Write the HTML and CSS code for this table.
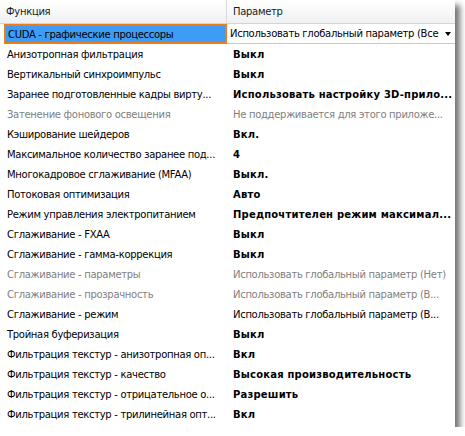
FILE: index.html
```html
<!DOCTYPE html>
<html lang="ru">
<head>
<meta charset="utf-8">
<title>Параметры</title>
<link rel="stylesheet" href="styles.css">
</head>
<body>
<div class="window">
  <div class="head">
    <div class="hcell hcell-left">Функция</div>
    <div class="hcell">Параметр</div>
  </div>
  <div class="rows">
    <div class="row selected">
      <div class="cell name">CUDA - графические процессоры</div>
      <div class="cell combo"><span class="combo-text">Использовать глобальный параметр (Все</span><span class="arrow"></span></div>
    </div>
    <div class="row"><div class="cell name">Анизотропная фильтрация</div><div class="cell val b">Выкл</div></div>
    <div class="row"><div class="cell name">Вертикальный синхроимпульс</div><div class="cell val b">Выкл</div></div>
    <div class="row"><div class="cell name">Заранее подготовленные кадры вирту...</div><div class="cell val b">Использовать настройку 3D-прило...</div></div>
    <div class="row dis"><div class="cell name">Затенение фонового освещения</div><div class="cell val">Не поддерживается для этого приложе...</div></div>
    <div class="row"><div class="cell name">Кэширование шейдеров</div><div class="cell val b">Вкл.</div></div>
    <div class="row"><div class="cell name">Максимальное количество заранее под...</div><div class="cell val b">4</div></div>
    <div class="row"><div class="cell name">Многокадровое сглаживание (MFAA)</div><div class="cell val b">Выкл.</div></div>
    <div class="row"><div class="cell name">Потоковая оптимизация</div><div class="cell val b">Авто</div></div>
    <div class="row"><div class="cell name">Режим управления электропитанием</div><div class="cell val b">Предпочтителен режим максимал...</div></div>
    <div class="row"><div class="cell name">Сглаживание - FXAA</div><div class="cell val b">Выкл</div></div>
    <div class="row"><div class="cell name">Сглаживание - гамма-коррекция</div><div class="cell val b">Выкл</div></div>
    <div class="row dis"><div class="cell name">Сглаживание - параметры</div><div class="cell val">Использовать глобальный параметр (Нет)</div></div>
    <div class="row dis"><div class="cell name">Сглаживание - прозрачность</div><div class="cell val">Использовать глобальный параметр (В...</div></div>
    <div class="row"><div class="cell name">Сглаживание - режим</div><div class="cell val">Использовать глобальный параметр (В...</div></div>
    <div class="row"><div class="cell name">Тройная буферизация</div><div class="cell val b">Выкл</div></div>
    <div class="row"><div class="cell name">Фильтрация текстур - анизотропная оп...</div><div class="cell val b">Вкл</div></div>
    <div class="row"><div class="cell name">Фильтрация текстур - качество</div><div class="cell val b">Высокая производительность</div></div>
    <div class="row"><div class="cell name">Фильтрация текстур - отрицательное о...</div><div class="cell val b">Разрешить</div></div>
    <div class="row"><div class="cell name">Фильтрация текстур - трилинейная опт...</div><div class="cell val b">Вкл</div></div>
  </div>
</div>
</body>
</html>
```

FILE: styles.css
```css
html, body {
  margin: 0;
  padding: 0;
  background: #ffffff;
}

body {
  font-family: "DejaVu Sans", Tahoma, sans-serif;
  font-size: 10px;
  letter-spacing: -0.3px;
  color: #000;
}

.window {
  width: 455px;
  height: 427px;
  background: #fff;
  box-shadow: 5px 5px 6px rgba(0, 0, 0, 0.55);
  overflow: hidden;
}

.head {
  display: grid;
  grid-template-columns: 227px 1fr;
  height: 23px;
  border-bottom: 1px solid #d5d5d5;
  background: linear-gradient(#ffffff, #f0f1f3);
}

.hcell {
  display: flex;
  align-items: center;
  padding-left: 6px;
  padding-bottom: 1px;
  color: #1a1a1a;
}

.hcell-left {
  border-right: 1px solid #d9d9d9;
}

.rows {
  display: flex;
  flex-direction: column;
}

.row {
  display: grid;
  grid-template-columns: 227px 1fr;
  height: 20px;
}

.cell {
  display: flex;
  align-items: center;
  white-space: nowrap;
  overflow: hidden;
}

.name {
  padding-left: 7px;
}

.val {
  padding-left: 6px;
  padding-right: 4px;
}

.b {
  font-weight: bold;
  letter-spacing: 0.2px;
}

.dis .cell {
  color: #808080;
}

.selected .name {
  margin-left: 4px;
  padding-left: 2px;
  border: 2px solid #ee7a18;
  background: #3d9cf5;
}

.combo {
  justify-content: space-between;
  padding-left: 3px;
  padding-right: 4px;
  border-bottom: 1px solid #c8c8c8;
}

.arrow {
  flex: none;
  width: 0;
  height: 0;
  border-left: 3px solid transparent;
  border-right: 3px solid transparent;
  border-top: 4px solid #000;
  margin-left: 4px;
}
```
